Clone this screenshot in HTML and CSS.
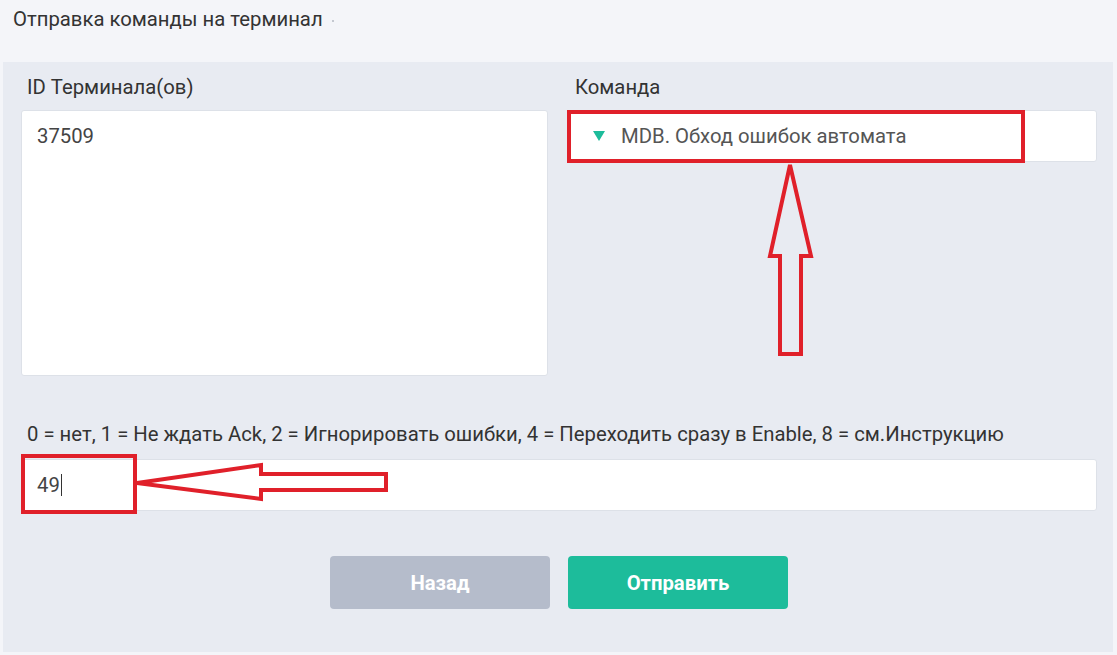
FILE: index.html
```html
<!DOCTYPE html>
<html>
<head>
    <title>Отправка команды на терминал</title>
    <link rel="stylesheet" href="styles.css">
</head>
<body>
    <div class="page-title">Отправка команды на терминал <span class="dot"></span></div>

    <div class="panel">
        <div class="form-row">
            <div class="field">
                <label class="field-label">ID Терминала(ов)</label>
                <div class="textarea">37509</div>
            </div>
            <div class="field">
                <label class="field-label">Команда</label>
                <div class="select">
                    <span class="caret"></span>
                    <span>MDB. Обход ошибок автомата</span>
                </div>
            </div>
        </div>

        <div class="field param">
            <label class="field-label">0 = нет, 1 = Не ждать Ack, 2 = Игнорировать ошибки, 4 = Переходить сразу в Enable, 8 = см.Инструкцию</label>
            <div class="input">49<span class="cursor"></span></div>
        </div>

        <div class="actions">
            <button class="btn btn-back">Назад</button>
            <button class="btn btn-send">Отправить</button>
        </div>
    </div>

    <!-- red marks drawn over the form -->
    <svg class="marks" width="1117" height="655" viewBox="0 0 1117 655">
        <g fill="none" stroke="#e0202a" stroke-width="4" stroke-linejoin="miter">
            <rect x="569" y="112" width="454" height="49"/>
            <polygon points="790,165 811,256 801,256 801,354 780,354 780,256 770,256"/>
            <rect x="23" y="456" width="112" height="56"/>
            <polygon points="137,483 261,465 261,474 386,474 386,490 261,490 261,499"/>
        </g>
    </svg>
</body>
</html>
```

FILE: styles.css
```css
body {
    margin: 0;
    background-color: #f4f5f9;
    font-family: Roboto, "Liberation Sans", Arial, sans-serif;
    color: #333;
    position: relative;
    height: 655px;
    overflow: hidden;
}
.page-title {
    height: 62px;
    box-sizing: border-box;
    padding: 7px 13px;
    font-size: 20.3px;
    line-height: 24px;
}
.dot {
    display: inline-block;
    width: 2px;
    height: 2px;
    margin-left: 4px;
    vertical-align: middle;
    background-color: #c4c8d0;
}
.panel {
    margin: 0 4px 0 3px;
    height: 590px;
    box-sizing: border-box;
    padding: 13px 16px 0 18px;
    background-color: #e8ebf2;
}
.form-row {
    display: grid;
    grid-template-columns: 527px 528px;
    gap: 21px;
}
.field {
    display: flex;
    flex-direction: column;
}
.field-label {
    padding-left: 6px;
    font-size: 20.3px;
    line-height: 24px;
    margin-bottom: 11px;
}
.textarea,
.select,
.input {
    background-color: #fff;
    border: 1px solid #dde1e8;
    border-radius: 3px;
    box-sizing: border-box;
    font-size: 20.3px;
    color: #444;
}
.textarea {
    height: 266px;
    padding: 13px 15px;
    line-height: 24px;
}
.select {
    height: 52px;
    display: flex;
    align-items: center;
    gap: 16px;
    padding: 0 0 1px 23px;
    color: #555;
}
.caret {
    width: 0;
    height: 0;
    border-left: 6px solid transparent;
    border-right: 6px solid transparent;
    border-top: 10px solid #1dbc9b;
}
.param {
    margin-top: 46px;
}
.param .field-label {
    margin-bottom: 13px;
}
.input {
    height: 52px;
    display: flex;
    align-items: center;
    padding: 0 15px;
}
.cursor {
    display: inline-block;
    width: 1px;
    height: 22px;
    margin-left: 1px;
    background-color: #333;
}
.actions {
    display: flex;
    justify-content: center;
    gap: 18px;
    margin-top: 45px;
}
.btn {
    width: 220px;
    height: 53px;
    border: none;
    border-radius: 4px;
    color: #fff;
    font-family: Roboto, "Liberation Sans", Arial, sans-serif;
    font-size: 20.3px;
    font-weight: 700;
    cursor: pointer;
}
.btn-back {
    background-color: #b5bccb;
}
.btn-send {
    background-color: #1dbc9b;
}
.marks {
    position: absolute;
    left: 0;
    top: 0;
    pointer-events: none;
}
```
